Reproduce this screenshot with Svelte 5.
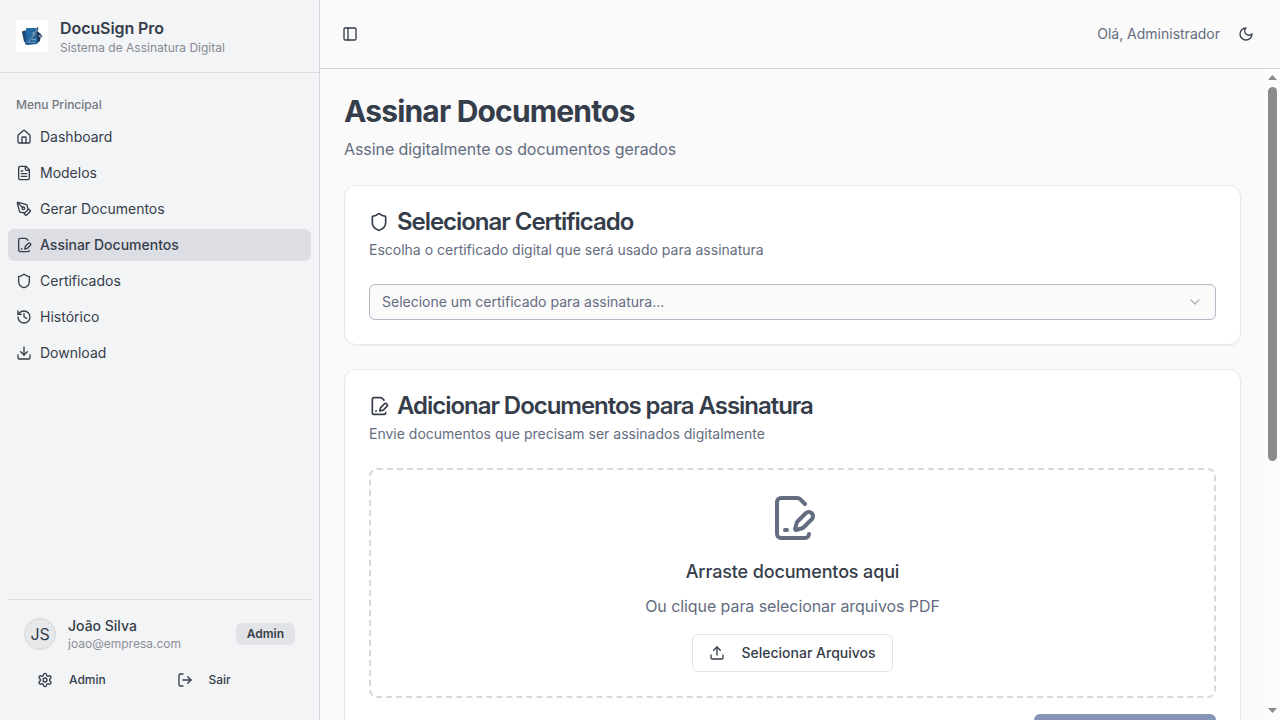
<script>
  const icons = {
    home: ['M15 21v-8a1 1 0 0 0-1-1h-4a1 1 0 0 0-1 1v8', 'M3 10a2 2 0 0 1 .709-1.528l7-5.999a2 2 0 0 1 2.582 0l7 5.999A2 2 0 0 1 21 10v9a2 2 0 0 1-2 2H5a2 2 0 0 1-2-2z'],
    file: ['M15 2H6a2 2 0 0 0-2 2v16a2 2 0 0 0 2 2h12a2 2 0 0 0 2-2V7Z', 'M14 2v4a2 2 0 0 0 2 2h4', 'M10 9H8', 'M16 13H8', 'M16 17H8'],
    pen: ['M15.707 21.293a1 1 0 0 1-1.414 0l-1.586-1.586a1 1 0 0 1 0-1.414l5.586-5.586a1 1 0 0 1 1.414 0l1.586 1.586a1 1 0 0 1 0 1.414z', 'm18 13-1.375-6.874a1 1 0 0 0-.746-.776L3.235 2.028a1 1 0 0 0-1.207 1.207L5.35 15.879a1 1 0 0 0 .776.746L13 18', 'm2.3 2.3 7.286 7.286', 'M9 11a2 2 0 1 0 4 0a2 2 0 1 0-4 0'],
    sign: ['m18 5-2.414-2.414A2 2 0 0 0 14.172 2H6a2 2 0 0 0-2 2v16a2 2 0 0 0 2 2h12a2 2 0 0 0 2-2', 'M21.378 12.626a1 1 0 0 0-3.004-3.004l-4.01 4.012a2 2 0 0 0-.506.854l-.837 2.87a.5.5 0 0 0 .62.62l2.87-.837a2 2 0 0 0 .854-.506z', 'M8 18h1'],
    shield: ['M20 13c0 5-3.5 7.5-7.66 8.95a1 1 0 0 1-.67-.01C7.5 20.5 4 18 4 13V6a1 1 0 0 1 1-1c2 0 4.5-1.2 6.24-2.72a1.17 1.17 0 0 1 1.52 0C14.51 3.81 17 5 19 5a1 1 0 0 1 1 1z'],
    history: ['M3 12a9 9 0 1 0 9-9 9.75 9.75 0 0 0-6.74 2.74L3 8', 'M3 3v5h5', 'M12 7v5l4 2'],
    download: ['M21 15v4a2 2 0 0 1-2 2H5a2 2 0 0 1-2-2v-4', 'm7 10 5 5 5-5', 'M12 15V3'],
    upload: ['M21 15v4a2 2 0 0 1-2 2H5a2 2 0 0 1-2-2v-4', 'm17 8-5-5-5 5', 'M12 3v12'],
    settings: ['M12.22 2h-.44a2 2 0 0 0-2 2v.18a2 2 0 0 1-1 1.73l-.43.25a2 2 0 0 1-2 0l-.15-.08a2 2 0 0 0-2.73.73l-.22.38a2 2 0 0 0 .73 2.73l.15.1a2 2 0 0 1 1 1.72v.51a2 2 0 0 1-1 1.74l-.15.09a2 2 0 0 0-.73 2.73l.22.38a2 2 0 0 0 2.73.73l.15-.08a2 2 0 0 1 2 0l.43.25a2 2 0 0 1 1 1.73V20a2 2 0 0 0 2 2h.44a2 2 0 0 0 2-2v-.18a2 2 0 0 1 1-1.73l.43-.25a2 2 0 0 1 2 0l.15.08a2 2 0 0 0 2.73-.73l.22-.39a2 2 0 0 0-.73-2.73l-.15-.08a2 2 0 0 1-1-1.74v-.5a2 2 0 0 1 1-1.74l.15-.09a2 2 0 0 0 .73-2.73l-.22-.38a2 2 0 0 0-2.73-.73l-.15.08a2 2 0 0 1-2 0l-.43-.25a2 2 0 0 1-1-1.73V4a2 2 0 0 0-2-2z', 'M9 12a3 3 0 1 0 6 0a3 3 0 1 0-6 0'],
    logout: ['M9 21H5a2 2 0 0 1-2-2V5a2 2 0 0 1 2-2h4', 'm16 17 5-5-5-5', 'M21 12H9'],
    panel: ['M5 3h14a2 2 0 0 1 2 2v14a2 2 0 0 1-2 2H5a2 2 0 0 1-2-2V5a2 2 0 0 1 2-2z', 'M9 3v18'],
    moon: ['M12 3a6 6 0 0 0 9 9 9 9 0 1 1-9-9Z'],
    chevron: ['m6 9 6 6 6-6'],
  };

  const menu = [
    { icon: 'home', label: 'Dashboard' },
    { icon: 'file', label: 'Modelos' },
    { icon: 'pen', label: 'Gerar Documentos' },
    { icon: 'sign', label: 'Assinar Documentos', active: true },
    { icon: 'shield', label: 'Certificados' },
    { icon: 'history', label: 'Histórico' },
    { icon: 'download', label: 'Download' },
  ];
</script>

{#snippet icon(name, size = 16)}
  <svg class="icon" width={size} height={size} viewBox="0 0 24 24" aria-hidden="true">
    {#each icons[name] as d}<path {d} />{/each}
  </svg>
{/snippet}

<div class="app">
  <aside>
    <div class="brand">
      <svg class="logo" width="32" height="32" viewBox="0 0 32 32" aria-hidden="true">
        <rect width="32" height="32" fill="#fff" />
        <path d="M6 11.5l3-1 1 12-2-1z" fill="#173a60" />
        <path d="M21 11l4 3-1 7-4 3z" fill="#1c3154" />
        <path d="M8 11l11-3 3 12-1 4-10 1-2-1z" fill="#1c548c" />
        <path d="M10 8h10l1 12-1 2H11z" fill="#286ba4" />
        <path d="M10 22l10 .7" stroke="#78a9cf" stroke-width=".8" />
        <path d="M13.5 20.5C16 18 18 13 21.5 6.500L22.500 9C20 14 18 18 16 20.500" fill="#244b76" />
        <path d="M13.500 21C17 17 19 13 21 8.500M17 12l1 4M16 19l4 1" fill="none" stroke="#a7c5dc" stroke-width=".8" />
        <circle cx="23.500" cy="16" r="1.200" fill="#8199b8" />
        <path d="M25 15l1.500 1-1 2z" fill="#1b2b4b" />
      </svg>
      <div class="brand-text">
        <div class="brand-name">DocuSign Pro</div>
        <div class="brand-sub">Sistema de Assinatura Digital</div>
      </div>
    </div>
    <nav>
      <div class="menu-label">Menu Principal</div>
      <ul>
        {#each menu as item}
          <li class:active={item.active}>{@render icon(item.icon)}<span>{item.label}</span></li>
        {/each}
      </ul>
    </nav>
    <footer>
      <div class="user">
        <div class="avatar">JS</div>
        <div class="who">
          <div class="name">João Silva</div>
          <div class="mail">joao@empresa.com</div>
        </div>
        <span class="badge">Admin</span>
      </div>
      <div class="user-actions">
        <button>{@render icon('settings')}Admin</button>
        <button>{@render icon('logout')}Sair</button>
      </div>
    </footer>
  </aside>

  <div class="main">
    <header>
      <button class="toggle" aria-label="Menu">{@render icon('panel')}</button>
      <div class="right">
        <span>Olá, Administrador</span>
        <button class="theme" aria-label="Tema">{@render icon('moon')}</button>
      </div>
    </header>
    <div class="viewport">
      <main>
        <div class="heading">
          <h1>Assinar Documentos</h1>
          <p>Assine digitalmente os documentos gerados</p>
        </div>

        <section class="card">
          <h2>{@render icon('shield', 20)}Selecionar Certificado</h2>
          <p class="desc">Escolha o certificado digital que será usado para assinatura</p>
          <button class="select"><span>Selecione um certificado para assinatura...</span>{@render icon('chevron')}</button>
        </section>

        <section class="card tall">
          <h2>{@render icon('sign', 20)}Adicionar Documentos para Assinatura</h2>
          <p class="desc">Envie documentos que precisam ser assinados digitalmente</p>
          <div class="drop">
            {@render icon('sign', 48)}
            <h3>Arraste documentos aqui</h3>
            <p>Ou clique para selecionar arquivos PDF</p>
            <button>{@render icon('upload')}Selecionar Arquivos</button>
          </div>
          <button class="submit" aria-label="Assinar"></button>
        </section>
      </main>
      <div class="scrollbar" aria-hidden="true">
        <svg width="9" height="5" viewBox="0 0 9 5"><path d="M4.500 0L9 5H0z" /></svg>
        <div class="track"><div class="thumb"></div></div>
        <svg width="9" height="5" viewBox="0 0 9 5"><path d="M0 0h9L4.500 5z" /></svg>
      </div>
    </div>
  </div>
</div>

<style>
  :global(body) { margin: 0; overflow: hidden; }
  * { box-sizing: border-box; }
  h1, h2, h3, p, ul { margin: 0; padding: 0; }
  button { font: inherit; color: inherit; border: 0; background: none; padding: 0; }
  .icon { flex: none; display: block; fill: none; stroke: currentColor; stroke-width: 2; stroke-linecap: round; stroke-linejoin: round; }
  .app { display: flex; width: 100vw; height: 100vh; overflow: hidden; font: 14px/20px Inter, sans-serif; color: #353d4a; background: #fafafa; }

  aside { width: 320px; flex: none; display: flex; flex-direction: column; background: #f3f4f6; border-right: 1px solid #d5d6dc; }
  .brand { height: 73px; display: flex; align-items: center; gap: 12px; padding: 0 16px; border-bottom: 1px solid #dadbde; }
  .logo { display: block; flex: none; }
  .brand-name { font-size: 16px; line-height: 24px; font-weight: 600; letter-spacing: -0.08px; }
  .brand-sub { font-size: 12px; line-height: 16px; color: #858a92; }
  .brand-text { padding-bottom: 1px; }
  nav { flex: 1; padding: 16px 8px; }
  .menu-label { height: 32px; display: flex; align-items: center; padding: 0 8px; font-size: 12px; font-weight: 500; color: #737780; }
  ul { list-style: none; display: flex; flex-direction: column; gap: 4px; }
  li { height: 32px; display: flex; align-items: center; gap: 8px; padding: 0 8px; border-radius: 6px; }
  li.active { background: #dddee4; font-weight: 500; }
  footer { height: 121px; margin: 0 8px; border-top: 1px solid #dadbde; }
  .user { display: flex; align-items: center; gap: 12px; padding: 16px 16px 0; }
  .avatar { width: 32px; height: 32px; border: 1px solid #d6d7da; border-radius: 50%; background: #e7e8ea; display: flex; align-items: center; justify-content: center; font-size: 16px; letter-spacing: -0.1px; }
  .who { flex: 1; }
  .name { font-weight: 500; line-height: 20px; }
  .mail { font-size: 12px; line-height: 16px; color: #8b8f96; }
  .badge { height: 22px; padding: 0 11px; border-radius: 6px; background: #e2e3e7; font-size: 12px; line-height: 22px; font-weight: 600; }
  .user-actions { display: grid; grid-template-columns: 139.5px 1fr; padding: 12px 0 0 29px; }
  .user-actions button { display: flex; align-items: center; gap: 16px; height: 32px; font-size: 12px; font-weight: 500; }

  .main { flex: 1; min-width: 0; display: flex; flex-direction: column; }
  header { height: 69px; flex: none; display: flex; align-items: center; justify-content: space-between; padding: 0 26px 0 22px; border-bottom: 1px solid #d5d6dc; }
  .right { display: flex; align-items: center; gap: 18px; color: #646c80; }
  .theme { color: #353d4a; }
  .viewport { flex: 1; min-height: 0; display: flex; }
  main { flex: 1; min-width: 0; overflow: hidden; padding: 24px; display: flex; flex-direction: column; gap: 24px; }
  .scrollbar { width: 15px; flex: none; display: flex; flex-direction: column; align-items: center; padding: 6px 0 7px; background: #fcfcfc; }
  .scrollbar svg { display: block; fill: #8b8b8b; }
  .track { flex: 1; padding-top: 7px; }
  .thumb { width: 9px; height: 374px; border-radius: 5px; background: #8b8b8b; }
  h1 { font-size: 30px; line-height: 36px; font-weight: 700; letter-spacing: -0.82px; }
  .heading p { margin-top: 8px; font-size: 16px; line-height: 24px; color: #646c80; letter-spacing: -0.075px; }
  .card { flex: none; background: #fff; border: 1px solid #e8e8ea; border-radius: 12px; padding: 24px; box-shadow: 0 1px 2px rgba(0, 0, 0, .05); }
  .tall { height: 679px; }
  h2 { display: flex; align-items: center; gap: 8px; font-size: 24px; line-height: 24px; font-weight: 600; letter-spacing: -1.04px; }
  .desc { margin: 6px 0 24px; color: #646c80; }
  .select { width: 100%; height: 36px; display: flex; align-items: center; justify-content: space-between; padding: 0 12px; border: 1px solid #b3b6c4; border-radius: 6px; background: #fafafa; color: #646c80; }
  .select .icon { opacity: .5; }
  .drop { height: 230px; display: flex; flex-direction: column; align-items: center; padding: 24px; border: 2px dashed #d8d9de; border-radius: 8px; color: #646c80; }
  .drop h3 { margin: 16px 0 8px; font-size: 18px; line-height: 28px; font-weight: 500; color: #353d4a; letter-spacing: -0.14px; }
  .drop p { font-size: 16px; line-height: 24px; margin-bottom: 16px; letter-spacing: -0.075px; }
  .drop button { height: 38px; display: flex; align-items: center; gap: 16px; padding: 0 16px; border: 1px solid #e2e3e6; border-radius: 6px; color: #353d4a; font-weight: 500; }
  .submit { display: block; width: 182px; height: 36px; margin: 16px 0 0 auto; border-radius: 6px; background: #8495b8; }
</style>
